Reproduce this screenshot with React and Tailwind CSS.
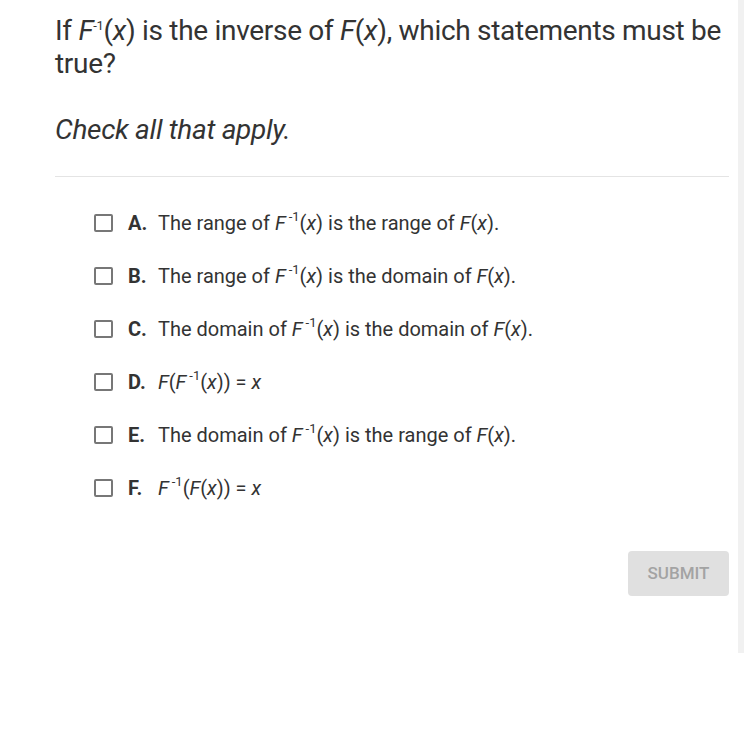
import React from "react";

const Inv = () => (
  <>
    <i>F</i>
    <span className="inline-block text-[13px] leading-none align-top mt-[2px] ml-[3px]">-1</span>
  </>
);

const options = [
  {
    key: "A",
    body: (
      <>
        The range of <Inv />(<i>x</i>) is the range of <i>F</i>(<i>x</i>).
      </>
    ),
  },
  {
    key: "B",
    body: (
      <>
        The range of <Inv />(<i>x</i>) is the domain of <i>F</i>(<i>x</i>).
      </>
    ),
  },
  {
    key: "C",
    body: (
      <>
        The domain of <Inv />(<i>x</i>) is the domain of <i>F</i>(<i>x</i>).
      </>
    ),
  },
  {
    key: "D",
    body: (
      <>
        <i>F</i>(<Inv />(<i>x</i>)) = <i>x</i>
      </>
    ),
  },
  {
    key: "E",
    body: (
      <>
        The domain of <Inv />(<i>x</i>) is the range of <i>F</i>(<i>x</i>).
      </>
    ),
  },
  {
    key: "F",
    body: (
      <>
        <Inv />(<i>F</i>(<i>x</i>)) = <i>x</i>
      </>
    ),
  },
];

export default function App() {
  return (
    <div
      className="w-[750px] h-[750px] bg-white flex text-[#333]"
      style={{ fontFamily: "Roboto, 'Liberation Sans', sans-serif" }}
    >
      <div className="w-[738px] pl-[55px] pr-[9px]">
        {/* question */}
        <div className="pt-[14px] text-[28px] leading-[33px] tracking-[-0.3px]">
          If <i>F</i>
          <span className="inline-block text-[13px] leading-none align-top mt-[5px]">-1</span>(<i>x</i>)
          is the inverse of <i>F</i>(<i>x</i>), which statements must be true?
        </div>
        <div className="mt-[33px] text-[28px] leading-[33px] italic tracking-[-0.3px]">
          Check all that apply.
        </div>

        <div className="mt-[30px] h-px bg-[#e4e4e4]" />

        {/* options */}
        <div className="mt-[31px] pl-[39px] flex flex-col gap-[23px]">
          {options.map((o) => (
            <div key={o.key} className="flex items-center h-[30px] text-[20px]">
              <div className="w-[19px] h-[18px] border-2 border-[#777] rounded-[2px]" />
              <span className="ml-[15px] w-[30px] font-bold">{o.key}.</span>
              <span>{o.body}</span>
            </div>
          ))}
        </div>

        {/* submit */}
        <div className="mt-[48px] flex justify-end">
          <div className="w-[101px] h-[45px] rounded-[4px] bg-[#e0e0e0] flex items-center justify-center text-[17px] font-medium text-[#a3a3a3]">
            SUBMIT
          </div>
        </div>
      </div>
      <div className="w-[6px] h-[653px] bg-[#f1f1f1]" />
    </div>
  );
}
